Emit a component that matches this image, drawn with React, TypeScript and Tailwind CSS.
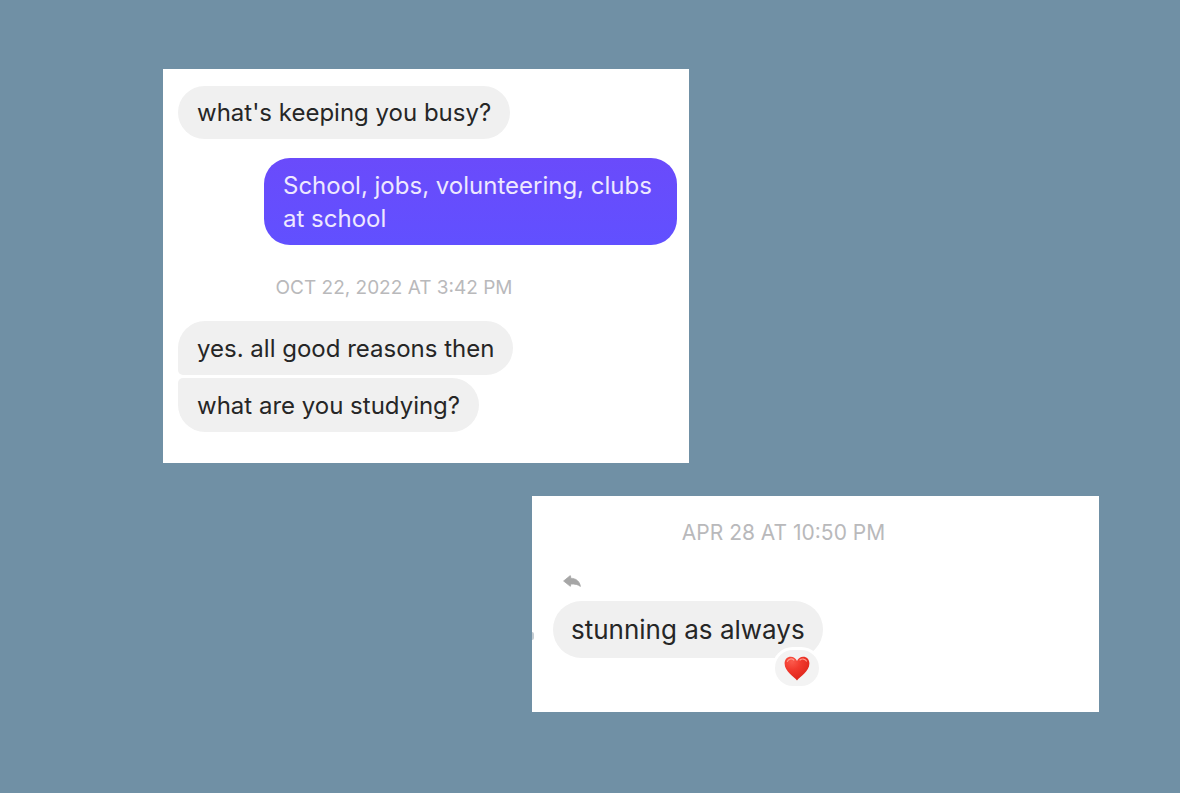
import type { ReactNode } from "react";

type BubbleProps = { children: ReactNode; className: string };

function Bubble({ children, className }: BubbleProps) {
  return (
    <p className={`w-fit leading-[33px] ${className}`}>{children}</p>
  );
}

function Timestamp({ children, className }: BubbleProps) {
  return (
    <time className={`block text-center leading-6 text-[#b9b9bb] ${className}`}>{children}</time>
  );
}

function ReplyIcon() {
  return (
    <svg viewBox="0 0 18 13" className="h-[13px] w-[18px]" fill="#a6a6a6" stroke="#a6a6a6" strokeWidth="0.8" strokeLinejoin="round" role="img" aria-label="Reply">
      <path d="M0.6 6 L7 0.8 Q7.6 0.5 7.6 1.2 V3.2 C13 3.4 16.6 6.2 17.4 11.4 C15 9.4 12 9 7.6 9 V10.8 Q7.6 11.6 7 11.1 Z" />
    </svg>
  );
}

function HeartIcon() {
  return (
    <svg viewBox="0 0 26 25" className="h-[25px] w-[26px]" role="img" aria-label="Heart reaction">
      <defs>
        <radialGradient id="heart" cx="0.3" cy="0.2" r="0.85">
          <stop offset="0" stopColor="#fb5a4c" />
          <stop offset="0.4" stopColor="#f23a2e" />
          <stop offset="1" stopColor="#dc2419" />
        </radialGradient>
      </defs>
      <path
        d="M13 24.4 C10.6 20.8 0.6 15.4 0.6 7.4 C0.6 3.4 3.3 0.8 6.8 0.8 C9.7 0.8 11.9 2.4 13 5 C14.1 2.4 16.3 0.8 19.2 0.8 C22.7 0.8 25.4 3.4 25.4 7.4 C25.4 15.4 15.4 20.8 13 24.4 Z"
        fill="url(#heart)"
      />
      <path d="M3.4 5.4 C4.3 2.8 7.6 2.2 9.8 4" fill="none" stroke="#ff9a8c" strokeWidth="1.2" strokeLinecap="round" />
      <path d="M16 4 C18 2.4 21 2.7 22.4 5" fill="none" stroke="#ff9a8c" strokeWidth="1.2" strokeLinecap="round" />
    </svg>
  );
}

export default function App() {
  return (
    <main className="flex min-h-screen flex-col gap-[33px] bg-[#7090a5] pt-[69px] pr-[81px] pb-20 pl-[163px] font-['Inter',sans-serif] text-[#262626]">
      <section aria-label="Conversation, October 2022" className="w-full max-w-[526px] bg-white pt-[17px] pr-3 pb-[31px] pl-[15px]">
        <Bubble className="rounded-[27px] bg-[#f0f0f0] px-[19px] py-[10px] text-2xl/[33px]">what's keeping you busy?</Bubble>
        <Bubble className="mt-[19px] ml-auto max-w-[413px] rounded-[26px] bg-linear-to-b from-[#6a4bfb] to-[#6150ff] px-[19px] pt-[11px] pb-[10px] text-2xl/[33px] text-[#eee8ff]">
          School, jobs, volunteering, clubs at school
        </Bubble>
        <Timestamp className="mt-[31px] pr-[67px] text-[19px]">OCT 22, 2022 AT 3:42 PM</Timestamp>
        <Bubble className="mt-[21px] rounded-[27px] rounded-bl-[5px] bg-[#f0f0f0] px-[19px] pt-[11px] pb-[10px] text-2xl/[33px]">yes. all good reasons then</Bubble>
        <Bubble className="mt-[3px] rounded-[27px] rounded-tl-[5px] bg-[#f0f0f0] px-[19px] pt-[11px] pb-[10px] text-2xl/[33px]">what are you studying?</Bubble>
      </section>

      <section aria-label="Conversation, April" className="relative w-full max-w-[567px] self-end bg-white px-[21px] pt-[25px] pb-[54px]">
        <Timestamp className="pr-[64px] text-[21px]">APR 28 AT 10:50 PM</Timestamp>
        <div className="mt-[30px] ml-[10px]">
          <ReplyIcon />
        </div>
        <div className="relative mt-[13px] w-fit">
          <Bubble className="rounded-[29px] bg-[#f0f0f0] px-[18px] py-3 text-[26px]">stunning as always</Bubble>
          <span className="absolute right-px -bottom-[31px] flex h-[42px] w-[50px] items-center justify-center rounded-[21px] border-[3px] border-white bg-[#f3f3f3]">
            <HeartIcon />
          </span>
        </div>
        <span aria-hidden="true" className="absolute bottom-[72px] left-0 h-2 w-0.5 rounded-r-full bg-[#c3cbd1]" />
      </section>
    </main>
  );
}
